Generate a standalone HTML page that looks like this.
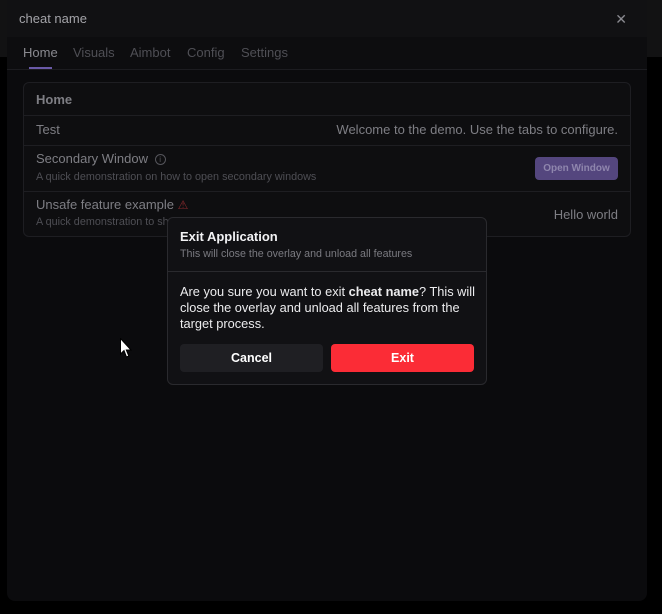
<!DOCTYPE html>
<html><head><meta charset="utf-8"><style>
*{box-sizing:border-box;margin:0;padding:0}
body{width:662px;height:614px;background:#000;font-family:"Liberation Sans",sans-serif;position:relative;overflow:hidden}
.top{position:absolute;left:0;top:0;width:662px;height:57px;background:#121213}
.win{position:absolute;left:7px;top:0;width:640px;height:601px;background:#0b0b0d;border-radius:0 0 8px 8px}
.title{position:absolute;left:0;top:0;width:640px;height:37px;background:#111113}
.title span{position:absolute;left:12px;top:11px;font-size:13px;color:#a3a3a8}
.x{position:absolute;right:20px;top:11px;color:#8a8a90;font-size:14px}
.tabs{position:absolute;left:0;top:37px;width:640px;height:33px;border-bottom:1px solid #1c1c20;background:#0d0d0f}
.tab{position:absolute;top:8px;font-size:13px;color:#4f4f55}
.ul{position:absolute;left:22px;top:30px;width:23px;height:2px;background:#6a5aa8}
.card{position:absolute;left:16px;top:82px;width:608px;height:155px;border:1px solid #1e1e22;border-radius:6px;background:#0e0e10}
.row{position:absolute;left:0;width:606px;border-top:1px solid #1e1e22}
.lbl{position:absolute;left:12px;font-size:13px;color:#7e7e84}
.sub{position:absolute;left:12px;font-size:10.8px;color:#4e4e54}
.r{position:absolute;right:12px;font-size:13px;color:#7e7e84}
.btn{position:absolute;right:12px;top:11px;width:83px;height:23px;background:#54467e;border-radius:4px;color:#8f86ad;font-size:10px;font-weight:bold;text-align:center;line-height:23px}
.modal{position:absolute;left:167px;top:217px;width:320px;height:168px;background:#111114;border:1px solid #2a2a2e;border-radius:6px}
.mh{height:54px;border-bottom:1px solid #2a2a2e}
.mt{position:absolute;left:12px;top:11px;font-size:13px;font-weight:bold;color:#f2f2f4}
.ms{position:absolute;left:12px;top:30px;font-size:10.7px;color:#7a7a80}
.body{position:absolute;left:12px;top:66px;width:300px;font-size:12.8px;line-height:16px;color:#ececee}
.b{position:absolute;top:126px;width:143px;height:28px;border-radius:4px;text-align:center;line-height:28px;font-size:12.5px;font-weight:bold;color:#fff}
</style></head><body>
<div class="top"></div>
<div class="win">
 <div class="title"><span>cheat name</span><div class="x">✕</div></div>
 <div class="tabs">
  <div class="tab" style="left:16px;color:#8a8a90">Home</div>
  <div class="tab" style="left:66px">Visuals</div>
  <div class="tab" style="left:123px">Aimbot</div>
  <div class="tab" style="left:180px">Config</div>
  <div class="tab" style="left:234px">Settings</div>
  <div class="ul"></div>
 </div>
 <div class="card">
  <div class="lbl" style="top:9px;font-weight:bold">Home</div>
  <div class="row" style="top:32px;height:30px"><div class="lbl" style="top:6px">Test</div><div class="r" style="top:6px">Welcome to the demo. Use the tabs to configure.</div></div>
  <div class="row" style="top:62px;height:46px"><div class="lbl" style="top:5px">Secondary Window <span style="border:1px solid #55555b;border-radius:50%;display:inline-block;width:11px;height:11px;font-size:8px;line-height:9px;text-align:center;color:#55555b;margin-left:3px;vertical-align:1px">i</span></div><div class="sub" style="top:25px">A quick demonstration on how to open secondary windows</div><div class="btn">Open Window</div></div>
  <div class="row" style="top:108px;height:46px"><div class="lbl" style="top:5px">Unsafe feature example <span style="color:#8a2a2e;font-size:12px">⚠</span></div><div class="sub" style="top:24px">A quick demonstration to show</div><div class="r" style="top:15px">Hello world</div></div>
 </div>
</div>
<div class="modal">
 <div class="mh"><div class="mt">Exit Application</div><div class="ms">This will close the overlay and unload all features</div></div>
 <div class="body">Are you sure you want to exit <b>cheat name</b>? This will close the overlay and unload all features from the target process.</div>
 <div class="b" style="left:12px;background:#1f1f23">Cancel</div>
 <div class="b" style="left:163px;background:#fb2c36">Exit</div>
</div>
<svg style="position:absolute;left:120px;top:338px" width="13" height="21" viewBox="0 0 13 21"><path d="M0.5 0.5 L0.5 16 L4 12.5 L6.5 19 L8.8 18 L6.3 12 L11 12 Z" fill="#fff" stroke="#000" stroke-width="1"/></svg>
</body></html>
